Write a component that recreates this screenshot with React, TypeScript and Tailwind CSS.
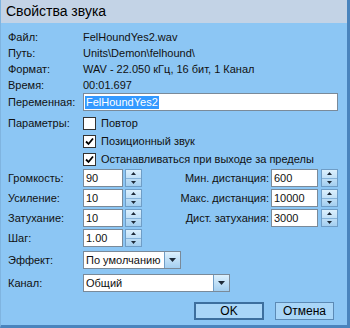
const Up = () => (
  <svg width="5" height="3" viewBox="0 0 5 3" aria-hidden="true">
    <path d="M2.5 0L5 3H0z" fill="#1d2a38" />
  </svg>
);

const Down = () => (
  <svg width="5" height="3" viewBox="0 0 5 3" aria-hidden="true">
    <path d="M0 0H5L2.5 3z" fill="#1d2a38" />
  </svg>
);

const Spinner = () => (
  <div className="flex h-[18px] w-[17px] flex-col border border-[#6f9dc6] bg-gradient-to-b from-[#dcf0fd] to-[#a4cff0]">
    <div className="flex flex-1 items-center justify-center border-b border-[#86b3da]">
      <Up />
    </div>
    <div className="flex flex-1 items-center justify-center">
      <Down />
    </div>
  </div>
);

const Check = ({ on }: { on?: boolean }) => (
  <div className="flex h-[13px] w-[13px] items-center justify-center border border-[#333] bg-white">
    {on && (
      <svg width="9" height="9" viewBox="0 0 9 9" aria-hidden="true">
        <path d="M1 4.5L3.5 7L8 1.5" stroke="#000" strokeWidth="1.8" fill="none" />
      </svg>
    )}
  </div>
);

const Combo = ({ value, width }: { value: string; width: string }) => (
  <div className={`flex h-[18px] items-stretch border border-[#7a8a99] bg-white ${width}`}>
    <span className="flex-1 pl-[2px] leading-[16px]">{value}</span>
    <div className="flex w-[16px] items-center justify-center border-l border-[#6f9dc6] bg-gradient-to-b from-[#dcf0fd] to-[#a4cff0]">
      <svg width="7" height="4" viewBox="0 0 7 4" aria-hidden="true">
        <path d="M0 0H7L3.5 4z" fill="#1d2a38" />
      </svg>
    </div>
  </div>
);

const info = [
  ["Файл:", "FelHoundYes2.wav"],
  ["Путь:", "Units\\Demon\\felhound\\"],
  ["Формат:", "WAV - 22.050 кГц, 16 бит, 1 Канал"],
  ["Время:", "00:01.697"],
];

const spins = [
  { label: "Громкость:", value: "90", rLabel: "Мин. дистанция:", rValue: "600" },
  { label: "Усиление:", value: "10", rLabel: "Макс. дистанция:", rValue: "10000" },
  { label: "Затухание:", value: "10", rLabel: "Дист. затухания:", rValue: "3000" },
  { label: "Шаг:", value: "1.00" },
];

export default function App() {
  return (
    <div className="flex h-[328px] w-[350px] flex-col border-b-[3px] border-r-[3px] border-l border-[#4a84bd] border-l-[#7fb4e0] bg-[#8cc6f4] font-['Liberation_Sans',Arial,sans-serif] text-[11px] text-[#111]">
      <div className="flex h-[23px] items-center bg-[#c3d3e6] px-[5px] text-[14px] text-black">
        Свойства звука
      </div>

      <div className="flex flex-1 flex-col pl-[7px] pr-[9px] pt-[6px]">
        {info.map(([k, v]) => (
          <div key={k} className="flex h-[16px] items-center">
            <span className="w-[75px]">{k}</span>
            <span>{v}</span>
          </div>
        ))}

        <div className="flex h-[18px] items-center">
          <span className="w-[75px]">Переменная:</span>
          <div className="flex h-[18px] flex-1 items-center border border-[#7a8a99] bg-white pl-[1px]">
            <span className="bg-[#3399ff] px-[1px] leading-[13px] text-white">FelHoundYes2</span>
          </div>
        </div>

        <div className="mt-[3px] flex h-[18px] items-center">
          <span className="w-[75px]">Параметры:</span>
          <Check />
          <span className="ml-[5px]">Повтор</span>
        </div>
        <div className="flex h-[18px] items-center pl-[75px]">
          <Check on />
          <span className="ml-[5px]">Позиционный звук</span>
        </div>
        <div className="flex h-[18px] items-center pl-[75px]">
          <Check on />
          <span className="ml-[5px]">Останавливаться при выходе за пределы</span>
        </div>

        <div className="mt-[1px] flex flex-col gap-[2px]">
          {spins.map((s) => (
            <div key={s.label} className="flex h-[18px] items-center">
              <span className="w-[75px]">{s.label}</span>
              <div className="h-[18px] w-[40px] border border-[#7a8a99] bg-white pl-[2px] leading-[16px]">{s.value}</div>
              <div className="ml-[2px]">
                <Spinner />
              </div>
              {s.rLabel && (
                <div className="ml-auto flex items-center">
                  <span className="pr-[2px] text-right">{s.rLabel}</span>
                  <div className="h-[18px] w-[47px] border border-[#7a8a99] bg-white pl-[2px] leading-[16px]">{s.rValue}</div>
                  <div className="ml-[3px]">
                    <Spinner />
                  </div>
                </div>
              )}
            </div>
          ))}
        </div>

        <div className="mt-[4px] flex h-[18px] items-center">
          <span className="w-[75px]">Эффект:</span>
          <Combo value="По умолчанию" width="w-[98px]" />
        </div>
        <div className="mt-[5px] flex h-[18px] items-center">
          <span className="w-[75px]">Канал:</span>
          <Combo value="Общий" width="w-[147px]" />
        </div>

        <div className="mt-[10px] flex justify-end gap-[11px] pr-[4px]">
          <button className="h-[18px] w-[70px] border-2 border-[#3d6f9e] bg-[#a9d6f8] text-[12px] leading-[14px] text-black">
            OK
          </button>
          <button className="h-[18px] w-[59px] border border-[#5c8ab5] bg-[#a9d6f8] text-[12px] leading-[16px] text-black">
            Отмена
          </button>
        </div>
      </div>
    </div>
  );
}
